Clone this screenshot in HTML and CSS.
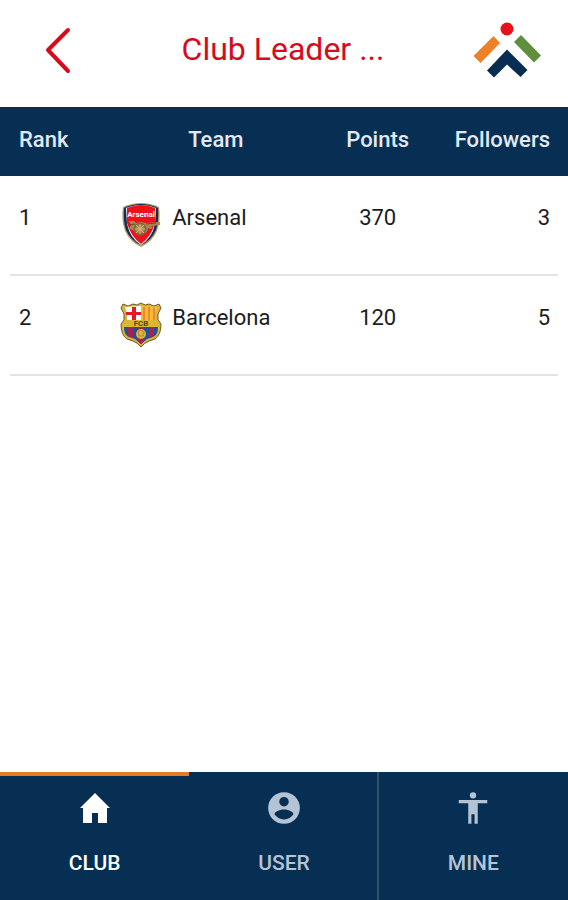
FILE: index.html
```html
<!DOCTYPE html>
<html lang="en">
<head>
<meta charset="utf-8">
<meta name="viewport" content="width=device-width, initial-scale=1">
<title>Club Leader Board</title>
<link rel="stylesheet" href="styles.css">
</head>
<body>
<header class="topbar">
  <button class="back" type="button" aria-label="Back">
    <svg width="28" height="48" viewBox="0 0 28 48"><path d="M23 4 3 24 23 45" fill="none" stroke="#d60b1c" stroke-width="4" stroke-linecap="round" stroke-linejoin="round"/></svg>
  </button>
  <h1 class="title">Club Leader ...</h1>
  <svg class="logo" width="70" height="58" viewBox="0 0 70 58" aria-hidden="true">
    <circle cx="35" cy="9" r="6.500" fill="#e8121d"/>
    <path d="M21.500 16 28 23 8.500 43 1.500 36z" fill="#ee8026"/>
    <path d="M49 15 69 35.500 62 42.500 42 22z" fill="#5f8f3c"/>
    <path d="M35 29.500 55.500 50 48.500 57 35 44.500 22 57.500 15 50.500z" fill="#082d53"/>
  </svg>
</header>
<main class="content">
  <table class="board">
    <thead>
      <tr><th class="rank" scope="col">Rank</th><th class="team" scope="col">Team</th><th class="points" scope="col">Points</th><th class="followers" scope="col">Followers</th></tr>
    </thead>
    <tbody>
      <tr>
        <td class="rank">1</td>
        <td class="team"><div class="club">
          <svg class="crest" width="42" height="46" viewBox="0 0 42 46" aria-hidden="true">
            <path d="M3 5Q12 1 21 1T39 5Q41 18 37 29 32 40 21 45 10 40 5 29 1 18 3 5z" fill="#b39b61"/>
            <path d="M4 6Q12 2 21 2T38 6Q39 19 36 28 31 39 21 43 11 39 6 28 3 19 4 6z" fill="#17295a"/>
            <path d="M6 6Q13 3 21 3T36 6L35 22Q32 36 21 43 10 36 7 22z" fill="#fff"/>
            <path d="M7 6Q14 3 21 3T35 6L35 21Q31 35 21 42 11 35 7 21z" fill="#ed111b"/>
            <text x="21" y="15" class="crest-name">Arsenal</text>
            <path d="M9 19h5l2 2 5-1 4 1 15-1v3l-9 1 2 2-3 1-2-1-1 4-4 2-7-1-3-3-4-1 2-4z" fill="#a88650"/>
            <circle cx="20" cy="27" r="5.500" fill="none" stroke="#80683f" stroke-width="2"/>
            <path d="M20 22v10M15 27h10M16 23l8 8M24 23l-8 8" stroke="#d7b679" stroke-width="1"/>
            <path d="M9 23l6-1m11 0 10-1" stroke="#624b2d"/>
          </svg>
          <span>Arsenal</span></div></td>
        <td class="points">370</td>
        <td class="followers">3</td>
      </tr>
      <tr>
        <td class="rank">2</td>
        <td class="team"><div class="club">
          <svg class="crest" width="42" height="46" viewBox="0 0 42 46" aria-hidden="true">
            <path d="M3 2 8 4 13 2 17 3 21 1 25 3 29 2 34 4 39 2 41 6 38 12 38 18 41 22Q41 33 35 37L29 39Q24 41 21 45 18 41 13 39L7 37Q1 33 1 22L4 18 4 12 1 6z" fill="#dab43c" stroke="#6b5b2c"/>
            <path d="M5 5 21 4V18H7V12z" fill="#fff"/>
            <path d="M12 5h4v5h5v3h-5v5h-4v-5H6v-3h6z" fill="#e31a2a"/>
            <path d="M21 4 37 5 35 12V18H21z" fill="#f4bd35"/>
            <path d="M24 5v13M29 5v13M34 6v12" stroke="#ee862f" stroke-width="2"/>
            <path d="M4 18h34v7H4z" fill="#d9b832"/>
            <text x="21" y="24" class="crest-initials">FCB</text>
            <path d="M4 25h34Q38 33 33 35L27 37 21 42 15 37 9 35Q4 33 4 25z" fill="#24509b"/>
            <path d="M8 25h5v11l-5-2zM18 25h6v14l-3 3-3-3zM29 25h5v9l-5 2z" fill="#a62350"/>
            <circle cx="21" cy="32" r="5" fill="#d8b43b"/>
            <path d="M18 30l3-2 3 2-1 4h-4z" fill="none" stroke="#b78831"/>
          </svg>
          <span>Barcelona</span></div></td>
        <td class="points">120</td>
        <td class="followers">5</td>
      </tr>
    </tbody>
  </table>
</main>
<nav class="tabs">
  <a class="tab active" href="#club" aria-current="page">
    <svg width="38" height="38" viewBox="0 0 38 38" aria-hidden="true"><path d="M19 4 34 19H31V34H22V24H16V34H7V19H4z" fill="currentColor"/></svg>
    <span>CLUB</span>
  </a>
  <a class="tab divided" href="#user">
    <svg width="38" height="38" viewBox="0 0 24 24" aria-hidden="true"><path d="M12 2a10 10 0 1 0 0 20 10 10 0 0 0 0-20zm0 3a3 3 0 1 1 0 6 3 3 0 0 1 0-6zm0 14.200A7.200 7.200 0 0 1 6 16c0-2 4-3.100 6-3.100s6 1.100 6 3.100a7.200 7.200 0 0 1-6 3.200z" fill="currentColor"/></svg>
    <span>USER</span>
  </a>
  <a class="tab" href="#mine">
    <svg width="38" height="38" viewBox="0 0 24 24" aria-hidden="true"><path d="M12 2a2 2 0 1 1 0 4 2 2 0 0 1 0-4zm9 7h-6v13h-2v-6h-2v6H9V9H3V7h18z" fill="currentColor"/></svg>
    <span>MINE</span>
  </a>
</nav>
</body>
</html>
```
FILE: styles.css
```css
* {
  box-sizing: border-box;
}

body {
  margin: 0;
  min-height: 100vh;
  display: flex;
  flex-direction: column;
  background: #fff;
  color: #1c1c1c;
  font-family: Roboto, "Liberation Sans", sans-serif;
  font-size: 22px;
}

.topbar {
  display: grid;
  grid-template-columns: 70px 1fr 70px;
  align-items: center;
  padding: 20px 26px 29px 24px;
}

.back {
  display: flex;
  justify-content: center;
  padding: 6px 0 4px;
  border: 0;
  background: none;
  cursor: pointer;
}

.title {
  margin: 0;
  color: #d60b1c;
  font-size: 32px;
  font-weight: 400;
  line-height: 36px;
  text-align: center;
}

.content {
  flex: 1;
}

.board {
  width: 100%;
  table-layout: fixed;
  border-collapse: collapse;
  line-height: 32px;
}

.board thead {
  background: #072f53;
  color: #e3e9f2;
}

.board th {
  padding: 17px 0 20px;
  font-weight: 500;
}

.board td {
  padding: 26px 0 28px;
  vertical-align: top;
}

.board tbody tr {
  background: linear-gradient(#e3e3e3, #e3e3e3) center bottom / calc(100% - 20px) 2px no-repeat;
}

.board .rank {
  width: 21%;
  padding-left: 19px;
  text-align: left;
}

.board .team {
  width: 34%;
}

.board .points {
  width: 23%;
  text-align: center;
}

.board .followers {
  padding-right: 18px;
  text-align: right;
}

.club {
  display: flex;
  align-items: flex-start;
  gap: 10px;
  padding-left: 1px;
}

.crest-name,
.crest-initials {
  font-size: 8px;
  font-weight: 700;
  text-anchor: middle;
}

.crest-name {
  fill: #fff;
}

.crest-initials {
  fill: #57451c;
}

.tabs {
  display: grid;
  grid-template-columns: repeat(3, 1fr);
  background: #072f53;
}

.tab {
  display: flex;
  flex-direction: column;
  align-items: center;
  gap: 24px;
  padding: 13px 0 25px;
  border-top: 4px solid transparent;
  color: #b5c4d5;
  font-size: 21px;
  font-weight: 500;
  line-height: 24px;
  text-decoration: none;
}

.tab.active {
  border-top-color: #e47c27;
  color: #fff;
}

.tab.divided {
  background: linear-gradient(#315469, #315469) right top / 2px 100% no-repeat border-box;
}
```
